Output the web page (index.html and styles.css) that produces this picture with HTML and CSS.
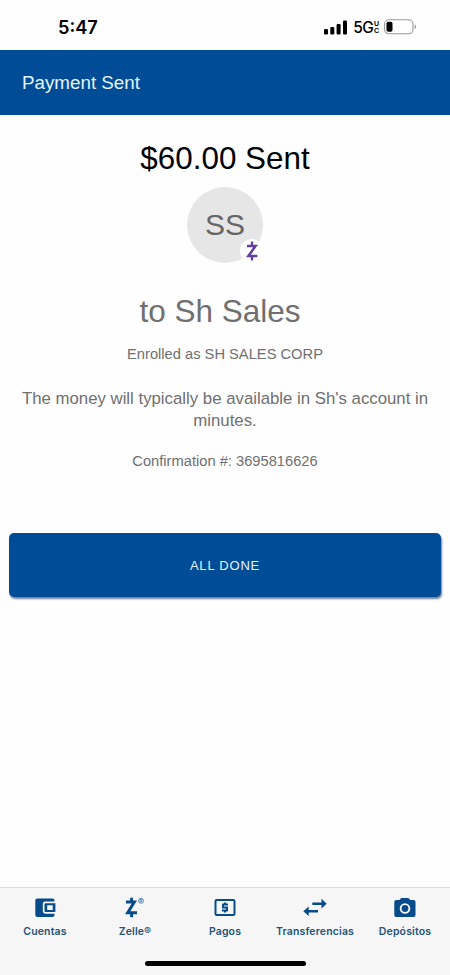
FILE: index.html
```
<!DOCTYPE html>
<html lang="en">
<head>
<meta charset="utf-8">
<title>Payment Sent</title>
<link rel="stylesheet" href="styles.css">
</head>
<body>
<div class="status">
  <span class="time">5:47</span>
  <div class="indicators">
    <svg class="signal" width="24" height="15" viewBox="0 0 24 15"><rect x="0" y="9" width="4" height="5.5" rx="1.2"/><rect x="6.3" y="7" width="4" height="7.5" rx="1.2"/><rect x="12.6" y="4" width="4" height="10.5" rx="1.2"/><rect x="19" y="0.5" width="4" height="14" rx="1.2"/></svg>
    <span class="network">5G</span>
    <span class="uc"><span>U</span><span>C</span></span>
    <svg class="battery" width="33" height="16" viewBox="0 0 33 16"><rect x=".6" y=".8" width="28.4" height="14" rx="4.3" fill="#fff" stroke="#999" stroke-width="1.1"/><rect x="2.5" y="2.8" width="6" height="10" rx="1.8"/><path d="M30.7 5.5c1.8.7 1.8 4 0 4.7z" fill="#999"/></svg>
  </div>
</div>
<header class="header">Payment Sent</header>
<main class="content">
  <h1 class="amount">$60.00 Sent</h1>
  <div class="avatar">SS
    <span class="badge"><svg width="12" height="20" viewBox="0 0 12 20" fill="none" stroke="#623fa0"><path d="M1 5h8.600L2.400 15h8.900" stroke-width="2.500"/><path d="M6 .6v4M6 15.400v4" stroke-width="2.300"/></svg></span>
  </div>
  <h2 class="recipient">to Sh Sales</h2>
  <p class="enrolled">Enrolled as SH SALES CORP</p>
  <p class="message">The money will typically be available in Sh's account in<br>minutes.</p>
  <p class="confirmation">Confirmation #: 3695816626</p>
  <button class="done">ALL DONE</button>
</main>
<nav class="tabs">
  <a class="tab"><svg width="24" height="24" viewBox="0 0 24 24"><path fill="currentColor" fill-rule="evenodd" d="M4.300 2.500h15.200q2 0 2 2v1h-9.300q-2.400 0-2.400 2.400v7.400q0 2.400 2.400 2.400h9.300v1.300q0 2-2 2H4.300q-2 0-2-2V4.500q0-2 2-2zM12.500 7.200h9.900v8.900h-9.900q-1 0-1-1V8.200q0-1 1-1zM14.200 9.300v4.700h5.500V9.300z"/><rect x="15.300" y="10.200" width="3" height="3" rx=".8" fill="#f6f6f6"/></svg><span>Cuentas</span></a>
  <a class="tab"><svg width="24" height="24" viewBox="0 0 24 24" fill="none" stroke="currentColor"><path d="M3 6.100h8.300L4.700 16.700h9.300" stroke-width="3"/><path d="M8.600 1.800v4M8.600 17v4.200" stroke-width="2.900"/><circle cx="18" cy="4.800" r="2.500" stroke-width=".6"/><path d="M17.200 6.400V3.300h1q.9 0 .9.800t-.9.800h-1M18.200 4.900l1 1.500" stroke-width=".5"/></svg><span>Zelle®</span></a>
  <a class="tab"><svg width="24" height="24" viewBox="0 0 24 24" fill="none" stroke="currentColor"><rect x="2.500" y="4" width="19" height="15" rx="1.200" stroke-width="2"/><path d="M15 8.600h-5v3h4v3H9M12 6.600v2M12 14.600v2" stroke-width="2"/></svg><span>Pagos</span></a>
  <a class="tab"><svg width="24" height="24" viewBox="0 0 24 24"><path fill="currentColor" d="M9.300 6.600h9.200V2.800l5.200 4.900-5.200 4.900V8.900H9.300zM15 14.100H5.700v-3.700L.3 15.200 5.700 20v-3.600H15z"/></svg><span>Transferencias</span></a>
  <a class="tab"><svg width="24" height="24" viewBox="0 0 24 24"><path fill="currentColor" fill-rule="evenodd" d="M8.300 2h7.100l1.900 2h3.300q1.900 0 1.900 1.900v13.200q0 1.900-1.900 1.900H3.200q-1.900 0-1.900-1.900V5.900Q1.300 4 3.200 4h3.200zM12 7.200a5.300 5.300 0 1 0 0 10.600 5.300 5.300 0 1 0 0-10.600z"/><circle cx="12" cy="12.500" r="3.400" fill="currentColor"/></svg><span>Depósitos</span></a>
  <span class="home"></span>
</nav>
</body>
</html>
```
FILE: styles.css
```
* { box-sizing: border-box; }
body {
  margin: 0;
  height: 975px;
  display: flex;
  flex-direction: column;
  overflow: hidden;
  background: #fefefe;
  color: #707070;
  font-family: "Liberation Sans", Arial, sans-serif;
}
h1, h2, p { margin: 0; font-weight: 400; white-space: nowrap; }
.status {
  height: 50px;
  padding: 4px 33px 0 58px;
  display: flex;
  align-items: center;
  justify-content: space-between;
  color: #000;
  font-family: Inter, sans-serif;
}
.time { font-size: 18.200px; font-weight: 600; }
.indicators { display: flex; align-items: center; }
.network { margin-left: 5px; font-size: 15.500px; font-weight: 500; letter-spacing: -0.800px; }
.uc { display: flex; flex-direction: column; margin: 0 5px 0 1px; font: 700 7px/7px "Liberation Sans", Arial, sans-serif; }
.header {
  height: 65px;
  padding-left: 22px;
  line-height: 65px;
  background: #004c97;
  color: #e4f4fb;
  font-size: 18.800px;
}
.content { flex: 1; display: flex; flex-direction: column; align-items: center; }
.amount { margin-top: 26px; color: #000; font-size: 31.400px; line-height: 36px; }
.avatar {
  position: relative;
  width: 76px;
  height: 76px;
  margin-top: 10px;
  border-radius: 50%;
  background: #e6e6e6;
  color: #666;
  font-size: 30px;
  line-height: 76px;
  text-align: center;
}
.badge {
  position: absolute;
  left: 53px;
  top: 52px;
  width: 24px;
  height: 24px;
  border-radius: 50%;
  background: #fefefe;
  display: flex;
  align-items: center;
  justify-content: center;
}
.recipient { margin: 30px 10px 0 0; font-size: 31.500px; line-height: 36px; }
.enrolled { margin-top: 15px; font-size: 14.700px; line-height: 20px; }
.message { margin-top: 24px; font-size: 16.800px; line-height: 21.500px; text-align: center; }
.confirmation { margin-top: 20px; font-size: 14.700px; line-height: 20px; }
.done {
  width: 432px;
  height: 64px;
  margin-top: 62px;
  padding: 0;
  border: 0;
  border-radius: 5px;
  background: #004c97;
  box-shadow: 1px 2px 2px #71819a;
  color: #e4f4fb;
  font: 13px "Liberation Sans", Arial, sans-serif;
  letter-spacing: 0.800px;
}
.tabs {
  position: relative;
  height: 88px;
  display: grid;
  grid-template-columns: repeat(5, 1fr);
  border-top: 1px solid #dcdcdc;
  background: #f6f6f6;
  color: #074b8a;
}
.tab { display: flex; flex-direction: column; align-items: center; padding-top: 8px; }
.tab span {
  margin-top: 5px;
  color: #245579;
  font: 600 10.500px/14px Inter, sans-serif;
  letter-spacing: 0.150px;
  white-space: nowrap;
}
.home {
  position: absolute;
  left: 145px;
  bottom: 9px;
  width: 161px;
  height: 5px;
  border-radius: 3px;
  background: #000;
}
```
